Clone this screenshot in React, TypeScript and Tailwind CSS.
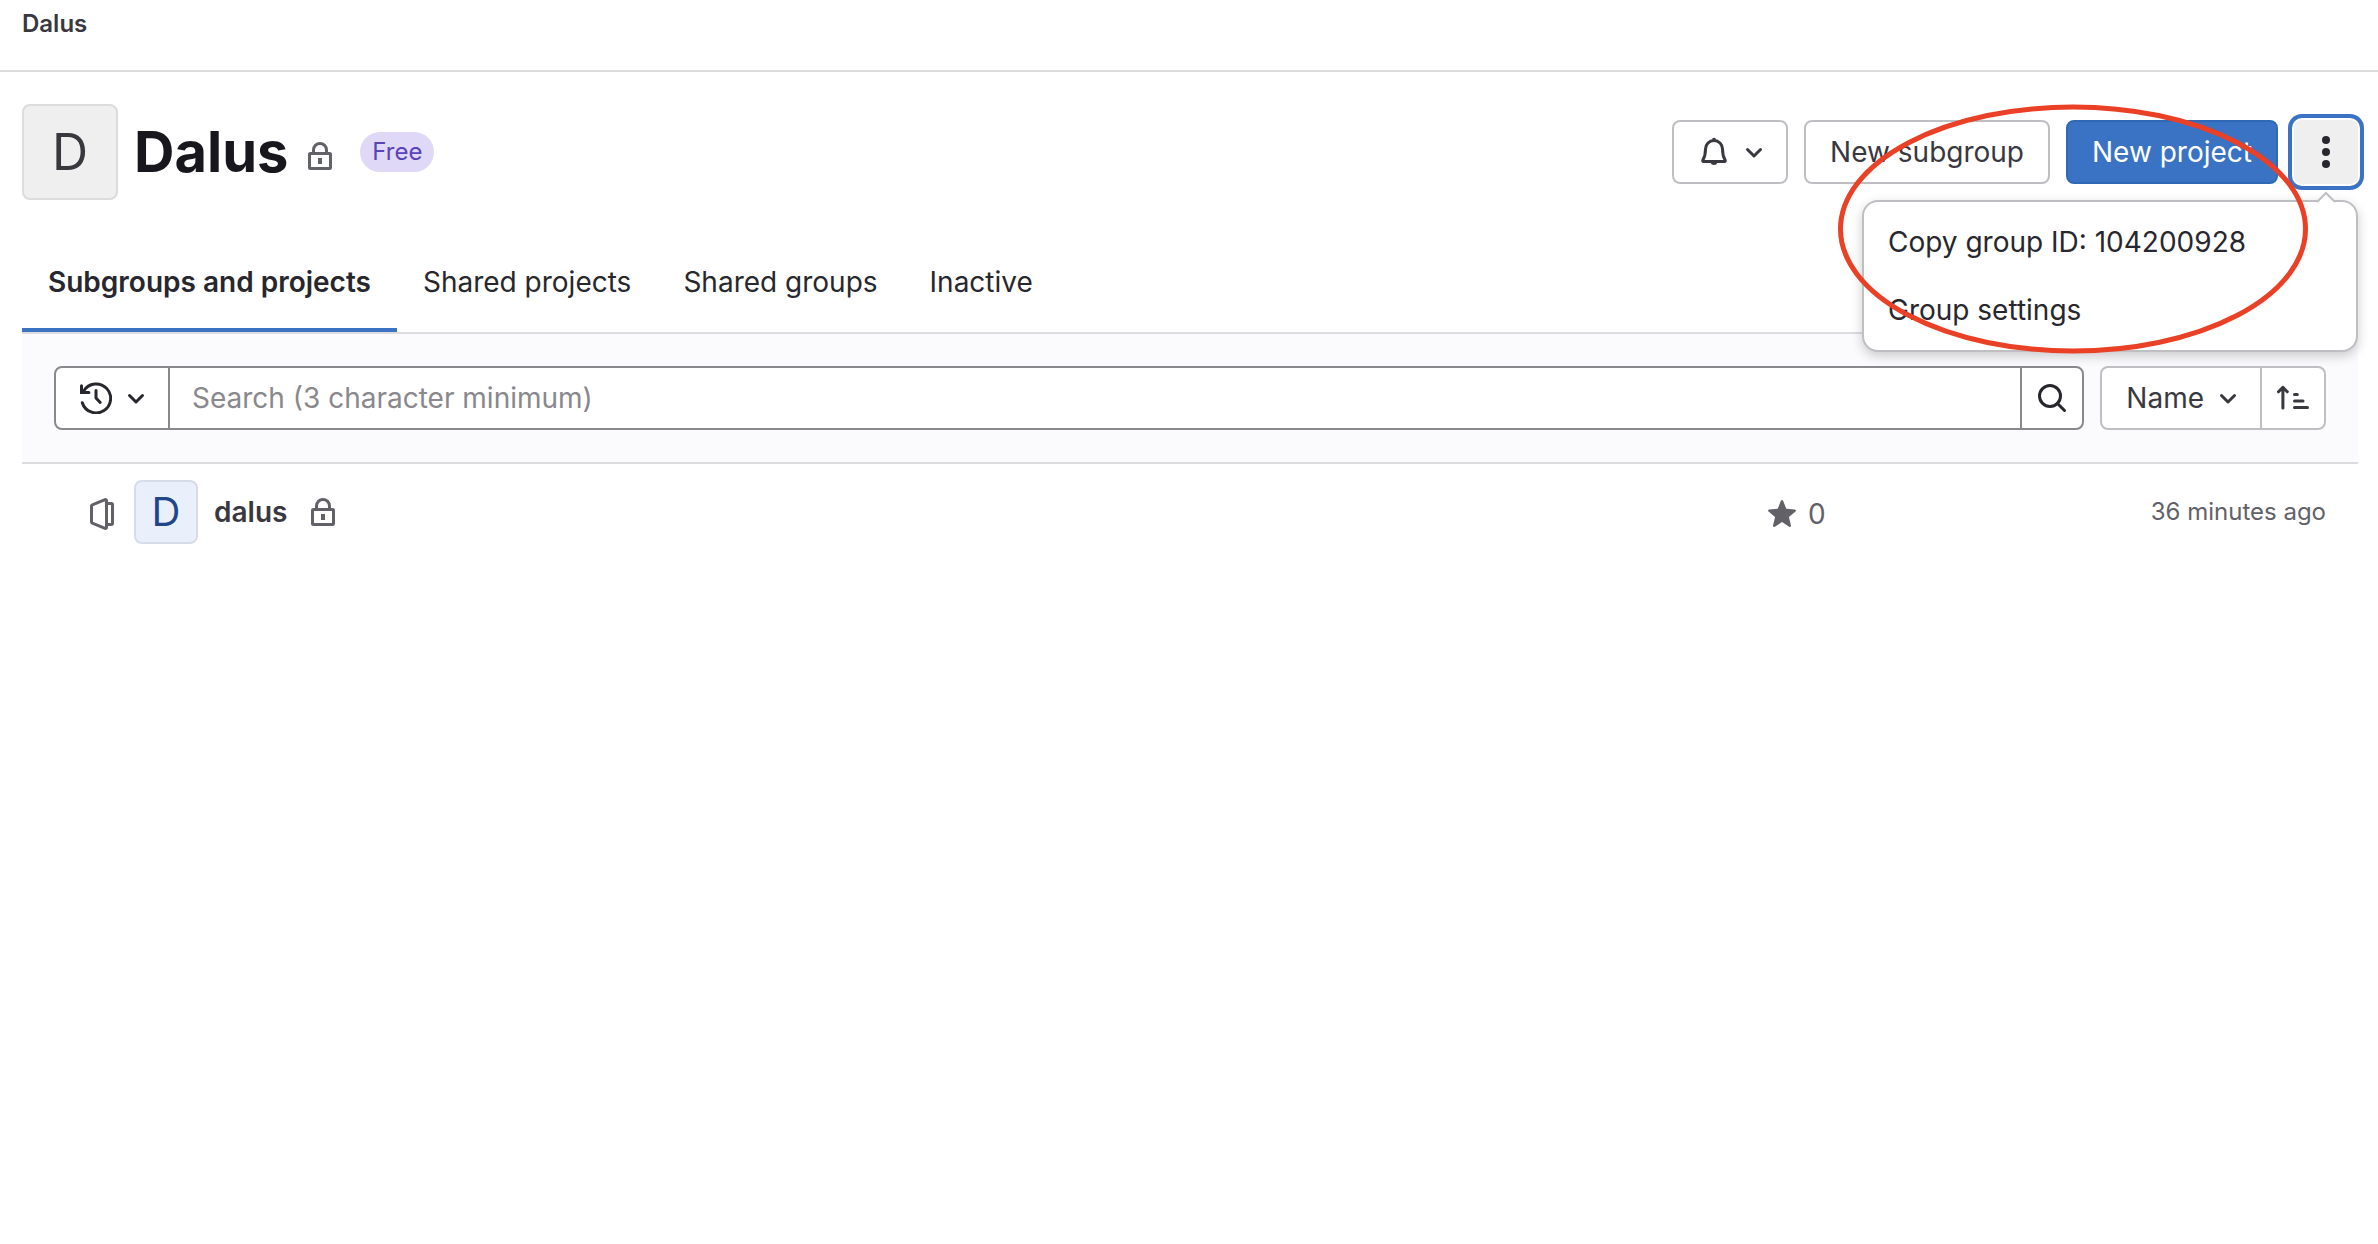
import React, { useState } from 'react';

type IconProps = {
  className?: string;
};

type Tab = {
  id: string;
  label: string;
};

type Project = {
  id: number;
  name: string;
  stars: number;
  updated: string;
};

const tabs: Tab[] = [
  { id: 'subgroups', label: 'Subgroups and projects' },
  { id: 'shared-projects', label: 'Shared projects' },
  { id: 'shared-groups', label: 'Shared groups' },
  { id: 'inactive', label: 'Inactive' },
];

const projects: Project[] = [
  { id: 1, name: 'dalus', stars: 0, updated: '36 minutes ago' },
];

function Icon({ className = '', children }: IconProps & { children: React.ReactNode }) {
  return (
    <svg
      viewBox="0 0 16 16"
      className={`size-8 shrink-0 ${className}`}
      fill="none"
      stroke="currentColor"
      strokeWidth="1.5"
      aria-hidden="true"
    >
      {children}
    </svg>
  );
}

function ChevronIcon({ className }: IconProps) {
  return (
    <Icon className={className}>
      <path d="M4.75 6.75 8 10l3.25-3.25" strokeLinecap="round" strokeLinejoin="round" />
    </Icon>
  );
}

function LockIcon({ className }: IconProps) {
  return (
    <Icon className={className}>
      <path d="M4.75 6.5V5a3.25 3.25 0 0 1 6.5 0v1.5" />
      <rect x="2.75" y="6.75" width="10.5" height="7.5" rx="0.4" />
      <path d="M7 9h2v3H7z" fill="currentColor" stroke="none" />
    </Icon>
  );
}

function BellIcon({ className }: IconProps) {
  return (
    <Icon className={className}>
      <path
        d="M8 2.25A4.25 4.25 0 0 0 3.75 6.5c0 2.6-.5 4.2-1.35 5.6-.15.3 0 .65.35.65h10.5c.35 0 .5-.35.35-.65-.85-1.4-1.35-3-1.35-5.6A4.25 4.25 0 0 0 8 2.25z"
        strokeLinejoin="round"
      />
      <path d="M7 1.9a1 1 0 0 1 2 0zM6.3 13.4h3.4a1.75 1.5 0 0 1-3.4 0z" fill="currentColor" stroke="none" />
    </Icon>
  );
}

function HistoryIcon({ className }: IconProps) {
  return (
    <Icon className={className}>
      <path d="M1.15 10.35A7.25 7.25 0 1 0 1.9 4.4" strokeLinecap="round" />
      <path d="M.75 1.9v3.35h3.7" strokeLinecap="round" />
      <path d="M8 4.25V8l2.1 2.25" strokeLinecap="round" strokeLinejoin="round" />
    </Icon>
  );
}

function SearchIcon({ className }: IconProps) {
  return (
    <Icon className={className}>
      <circle cx="7" cy="7" r="5.25" />
      <path d="m10.75 10.75 3.5 3.5" strokeLinecap="round" />
    </Icon>
  );
}

function SortIcon({ className }: IconProps) {
  return (
    <Icon className={className}>
      <path
        d="M2.95 13V2.7M.75 4.9l2.2-2.2 2.2 2.2M8.75 6.25h1.4M8.75 9.5h4.25M8.75 12.75h6.5"
        strokeLinecap="round"
        strokeLinejoin="round"
      />
    </Icon>
  );
}

function KebabIcon({ className }: IconProps) {
  return (
    <Icon className={className}>
      <g fill="currentColor" stroke="none">
        <circle cx="8" cy="2" r="2" />
        <circle cx="8" cy="8" r="2" />
        <circle cx="8" cy="14" r="2" />
      </g>
    </Icon>
  );
}

function ProjectIcon({ className }: IconProps) {
  return (
    <Icon className={className}>
      <path d="M10.25 1.3v13.4c0 .4-.35.6-.7.45l-6.4-2.6a.6.6 0 0 1-.4-.6V4.05a.6.6 0 0 1 .4-.6l6.4-2.6c.35-.15.7.05.7.45z" />
      <path d="M10.25 2.75h2.4c.35 0 .6.25.6.6v9.3c0 .35-.25.6-.6.6h-2.4" />
    </Icon>
  );
}

function StarIcon({ className }: IconProps) {
  return (
    <Icon className={className}>
      <path
        d="M7.45 1.4a.6.6 0 0 1 1.1 0l1.6 4 4.25.3c.55.05.8.7.35 1.05l-3.3 2.75 1.05 4.2c.15.55-.45.95-.9.65L8 12.05l-3.6 2.3c-.45.3-1.05-.1-.9-.65l1.05-4.2-3.3-2.75c-.45-.35-.2-1 .35-1.05l4.25-.3z"
        fill="currentColor"
        stroke="none"
      />
    </Icon>
  );
}

function GroupMenu() {
  return (
    <div
      role="menu"
      className="absolute top-20 right-0 z-10 w-[496px] rounded-2xl border-2 border-[#bfbfc3] bg-white py-1.5 shadow-[0_4px_12px_0_rgba(0,0,0,0.2)]"
    >
      <svg viewBox="0 0 20 12" className="absolute -top-[11px] right-5 h-3 w-5" aria-hidden="true">
        <path d="M0 12 10 2l10 10z" fill="#fff" />
        <path d="M1 11 10 2l9 9" fill="none" stroke="#bfbfc3" strokeWidth="2" />
      </svg>
      <button type="button" role="menuitem" className="block h-[68px] w-full px-6 text-left hover:bg-[#ececef]">
        Copy group ID: 104200928
      </button>
      <button type="button" role="menuitem" className="block h-[68px] w-full px-6 text-left hover:bg-[#ececef]">
        Group settings
      </button>
    </div>
  );
}

function GroupHeader() {
  const [menuOpen, setMenuOpen] = useState(true);

  return (
    <header className="relative flex items-center justify-between">
      <div className="flex items-center">
        <div className="flex size-24 items-center justify-center rounded-lg border-2 border-[#dcdcde] bg-[#efefef] text-[50px] text-[#3a383f]">
          D
        </div>
        <h1 className="ml-4 text-[56px] leading-[72px] font-bold text-[#18171d]">Dalus</h1>
        <LockIcon className="ml-4 mt-2 text-[#626168]" />
        <span className="ml-6 rounded-full bg-[#dfd8f7] px-3 text-2xl leading-10 text-[#5943b6]">Free</span>
      </div>

      <div className="flex gap-4">
        <button
          type="button"
          aria-label="Notifications"
          className="flex h-16 items-center gap-2 rounded-lg border-2 border-[#bfbfc3] bg-white pr-4 pl-6 text-[#3a383f]"
        >
          <BellIcon />
          <ChevronIcon />
        </button>
        <button type="button" className="h-16 rounded-lg border-2 border-[#bfbfc3] bg-white px-6 text-[#3a383f]">
          New subgroup
        </button>
        <button type="button" className="h-16 rounded-lg border-2 border-[#2f68b4] bg-[#3a72c4] px-6 text-white">
          New project
        </button>
        <div className="relative">
          <button
            type="button"
            aria-label="Group actions"
            aria-expanded={menuOpen}
            onClick={() => setMenuOpen(!menuOpen)}
            className="flex size-16 items-center justify-center rounded-lg bg-[#efefef] shadow-[0_0_0_2px_#fff,0_0_0_6px_#3a72c4]"
          >
            <KebabIcon />
          </button>
          {menuOpen && <GroupMenu />}
        </div>
      </div>

      {/* hand-drawn style highlight over the open menu */}
      <svg
        viewBox="0 0 470 250"
        className="pointer-events-none absolute top-0 right-[50px] z-20 h-[250px] w-[470px]"
        aria-hidden="true"
      >
        <ellipse cx="235" cy="125" rx="232.5" ry="122" fill="none" stroke="#ea4025" strokeWidth="5" />
      </svg>
    </header>
  );
}

function FilterBar() {
  const [search, setSearch] = useState('');

  return (
    <div className="flex gap-4 border-b-2 border-[#dcdcde] bg-[#fbfafd] px-8 py-8">
      <form className="flex h-16 flex-1 rounded-lg border-2 border-[#89888d] bg-white" onSubmit={e => e.preventDefault()}>
        <button
          type="button"
          aria-label="Recent searches"
          className="flex items-center gap-2 border-r-2 border-[#89888d] pr-4 pl-6"
        >
          <HistoryIcon />
          <ChevronIcon />
        </button>
        <input
          type="text"
          aria-label="Search"
          value={search}
          onChange={e => setSearch(e.target.value)}
          placeholder="Search (3 character minimum)"
          className="min-w-0 flex-1 px-[22px] outline-none placeholder:text-[#89888d]"
        />
        <button type="submit" aria-label="Search" className="border-l-2 border-[#89888d] px-3.5">
          <SearchIcon />
        </button>
      </form>

      <div className="flex h-16 rounded-lg border-2 border-[#bfbfc3] bg-white text-[#3a383f]">
        <button type="button" className="flex items-center gap-2 pr-4 pl-6">
          Name
          <ChevronIcon />
        </button>
        <button type="button" aria-label="Sort direction: ascending" className="border-l-2 border-[#bfbfc3] px-[15px]">
          <SortIcon />
        </button>
      </div>
    </div>
  );
}

function ProjectRow({ project }: { project: Project }) {
  return (
    <li className="flex items-center justify-between py-4 pr-8 pl-16">
      <div className="flex items-center">
        <ProjectIcon className="mt-1 text-[#626168]" />
        <div className="ml-4 flex size-16 items-center justify-center rounded-lg border-2 border-[#d5dce8] bg-[#e9f0fb] text-[40px] text-[#1f4787]">
          {project.name.charAt(0).toUpperCase()}
        </div>
        <a href="#" className="ml-4 font-semibold text-[#3a383f]">
          {project.name}
        </a>
        <LockIcon className="ml-5 text-[#626168]" />
      </div>
      <div className="flex w-[560px] items-center justify-between text-[#626168]">
        <span className="flex items-center gap-2.5 pt-1">
          <StarIcon />
          {project.stars}
        </span>
        <time className="text-2xl">{project.updated}</time>
      </div>
    </li>
  );
}

export default function App() {
  const [activeTab, setActiveTab] = useState('subgroups');

  return (
    <div className="min-h-screen bg-white font-['Inter',sans-serif] text-[28px] leading-10 text-[#28272d]">
      <nav aria-label="Breadcrumb" className="border-b-2 border-[#dcdcde] px-[22px] pt-1 pb-[26px]">
        <a href="#" className="block text-2xl leading-10 font-semibold text-[#3a383f]">
          Dalus
        </a>
      </nav>

      <main className="pt-8 pr-5 pl-[22px]">
        <GroupHeader />

        <div role="tablist" className="mt-8 flex border-b-2 border-[#dcdcde]">
          {tabs.map(tab => (
            <button
              key={tab.id}
              type="button"
              role="tab"
              aria-selected={activeTab === tab.id}
              onClick={() => setActiveTab(tab.id)}
              className={`h-[100px] border-b-4 px-[26px] pt-1 ${
                activeTab === tab.id ? 'border-[#3a72c4] font-semibold' : 'border-transparent'
              }`}
            >
              {tab.label}
            </button>
          ))}
        </div>

        <FilterBar />

        <ul>
          {projects.map(project => (
            <ProjectRow key={project.id} project={project} />
          ))}
        </ul>
      </main>
    </div>
  );
}
